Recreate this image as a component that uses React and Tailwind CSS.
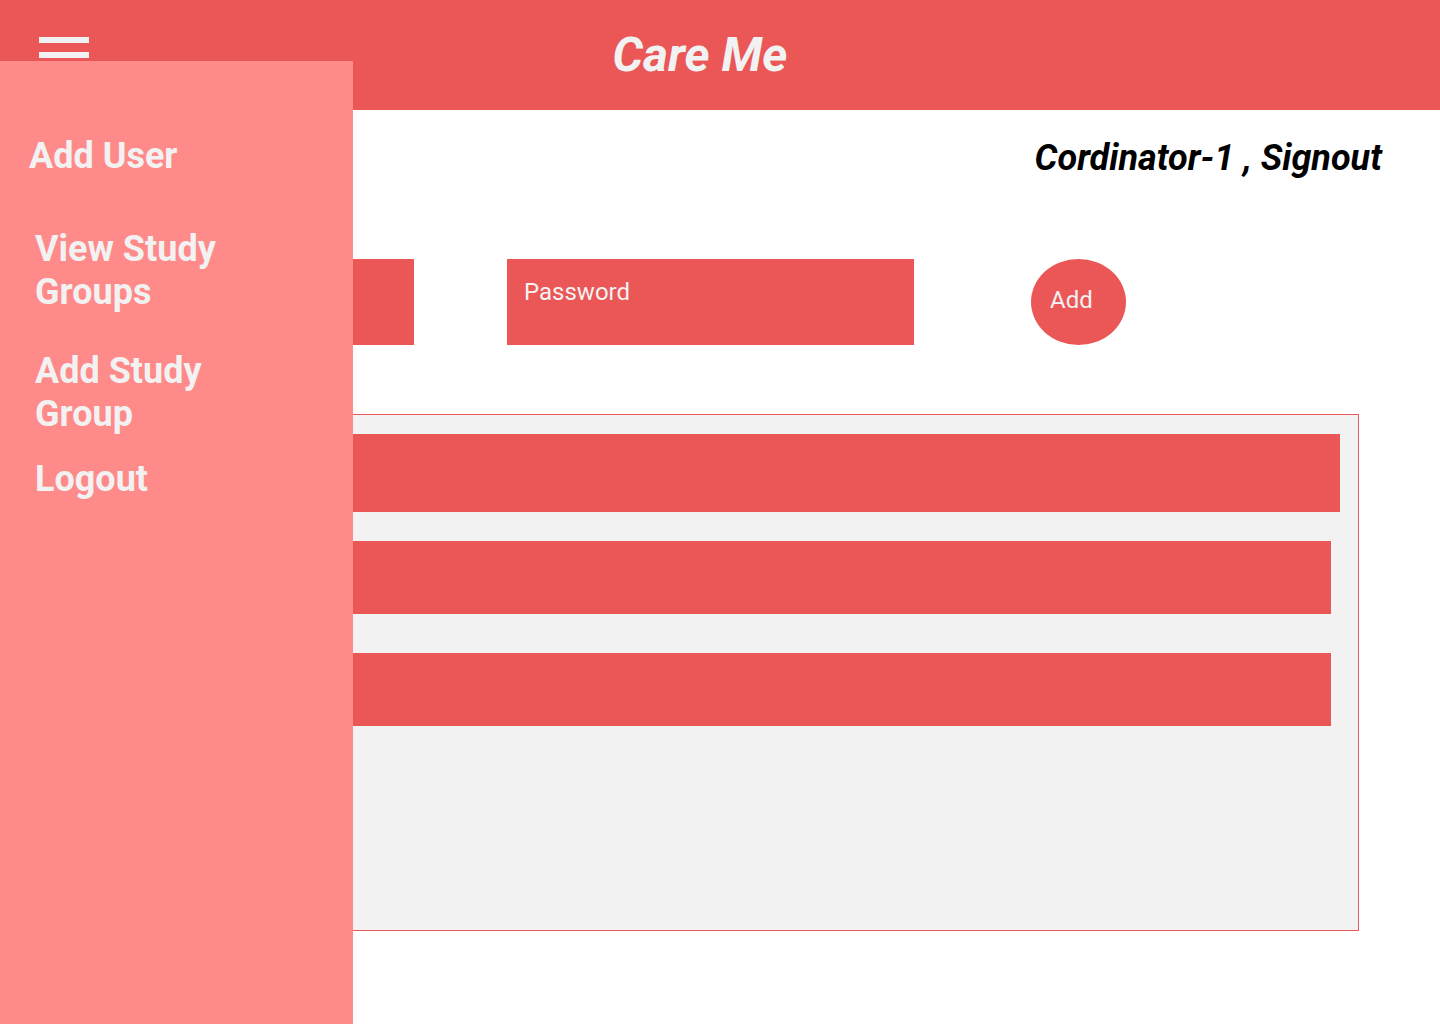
import React from "react";

const menuItems = [
  { label: "View Study Groups", className: "mt-[50px] ml-[35px] w-[220px]" },
  { label: "Add Study Group", className: "mt-[36px] ml-[35px] w-[200px]" },
  { label: "Logout", className: "mt-[22px] ml-[35px]" },
];

const Sidebar = () => (
  <aside className="absolute top-[61px] left-0 bottom-0 w-[353px] bg-[#ff8a8a] text-[#f2f2f2] font-bold text-[36px] leading-[43px]">
    <div className="mt-[74px] ml-[29px]">Add User</div>
    {menuItems.map((item) => (
      <div key={item.label} className={item.className}>
        {item.label}
      </div>
    ))}
  </aside>
);

const App = () => {
  return (
    <div className="relative min-h-[1024px] bg-white font-['Roboto',sans-serif]">
      {/* top bar */}
      <header className="flex h-[110px] items-center bg-[#eb5757]">
        <div className="ml-[39px] flex w-[50px] flex-col gap-[9px]">
          <span className="h-[6px] bg-[#f2f2f2]" />
          <span className="h-[6px] bg-[#f2f2f2]" />
          <span className="h-[6px] bg-[#f2f2f2]" />
        </div>
        <h1 className="flex-1 pr-[129px] text-center text-[48px] font-bold italic text-[#f2f2f2]">
          Care Me
        </h1>
      </header>

      <div className="mt-[27px] pr-[58px] text-right text-[36px] leading-[42px] font-bold italic text-black">
        Cordinator-1 , Signout
      </div>

      {/* add user form */}
      <div className="mt-[80px] flex items-start">
        <div className="ml-[7px] h-[86px] w-[407px] bg-[#eb5757]" />
        <div className="ml-[93px] h-[86px] w-[407px] bg-[#eb5757] pt-[19px] pl-[17px] text-[24px] leading-[28px] text-[#f2f2f2]">
          Password
        </div>
        <button className="ml-[117px] h-[86px] w-[95px] rounded-[50%] bg-[#eb5757] pb-[4px] pl-[19px] text-left text-[24px] leading-[28px] text-[#f2f2f2]">
          Add
        </button>
      </div>

      {/* user list */}
      <div className="mt-[69px] ml-[82px] h-[517px] w-[1277px] border border-[#eb5757] bg-[#f2f2f2]">
        <div className="mt-[19px] ml-[18px] mr-[18px] h-[78px] bg-[#eb5757]" />
        <div className="mt-[29px] ml-[18px] mr-[27px] h-[73px] bg-[#eb5757]" />
        <div className="mt-[39px] ml-[18px] mr-[27px] h-[73px] bg-[#eb5757]" />
      </div>

      <Sidebar />
    </div>
  );
};

export default App;
